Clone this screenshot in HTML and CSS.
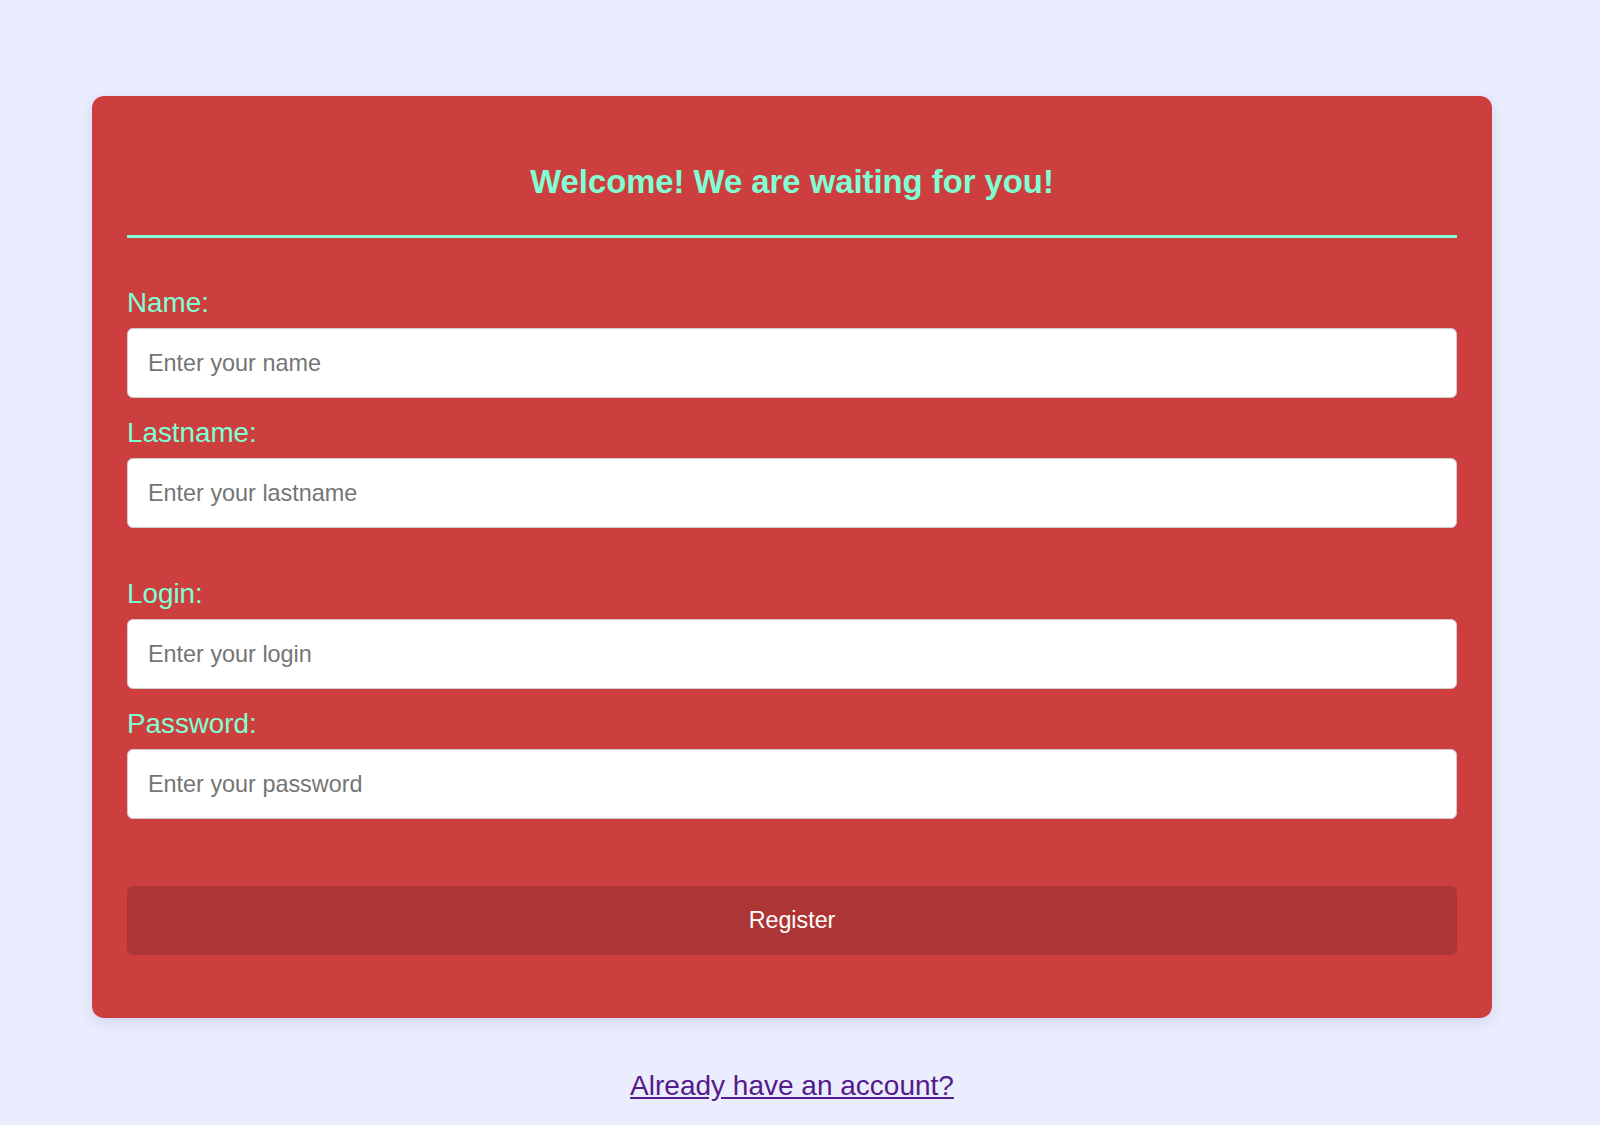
FILE: index.html
```html
<!DOCTYPE html>
<html lang="en">
<head>
<meta charset="utf-8">
<title>Register</title>
<link rel="stylesheet" href="styles.css">
</head>
<body>
<div class="page">
  <form class="card">
    <h2 class="title">Welcome! We are waiting for you!</h2>
    <div class="group">
      <label class="label" for="name">Name:</label>
      <input class="input" id="name" type="text" placeholder="Enter your name">
      <label class="label" for="lastname">Lastname:</label>
      <input class="input" id="lastname" type="text" placeholder="Enter your lastname">
    </div>
    <div class="group">
      <label class="label" for="login">Login:</label>
      <input class="input" id="login" type="text" placeholder="Enter your login">
      <label class="label" for="password">Password:</label>
      <input class="input" id="password" type="password" placeholder="Enter your password">
    </div>
    <button class="btn" type="button">Register</button>
  </form>
  <a class="link" href="#">Already have an account?</a>
</div>
</body>
</html>
```
FILE: styles.css
```css
html, body {
  margin: 0;
  padding: 0;
  background: #eaedfd;
  font-family: "Liberation Sans", Arial, sans-serif;
}
.page {
  width: 1584px;
  padding-top: 96px;
  display: flex;
  flex-direction: column;
  align-items: center;
}
.card {
  box-sizing: border-box;
  width: 1400px;
  background: #cd3f3f;
  border-radius: 12px;
  padding: 35px 35px 35px 35px;
  box-shadow: 0 4px 14px rgba(40, 50, 120, 0.12);
  display: flex;
  flex-direction: column;
}
.title {
  margin: 32px 0 0 0;
  padding-bottom: 35px;
  border-bottom: 3px solid #7fffd4;
  color: #7fffd4;
  font-size: 32.8px;
  font-weight: bold;
  line-height: 37px;
  text-align: center;
}
.group {
  display: flex;
  flex-direction: column;
  margin-top: 48px;
}
.group + .group {
  margin-top: 49px;
}
.label {
  color: #7fffd4;
  font-size: 27.8px;
  line-height: 33px;
  margin-bottom: 9px;
}
.input {
  box-sizing: border-box;
  height: 70px;
  margin: 0 0 18px 0;
  padding: 0 20px;
  border: 1px solid #cccccc;
  border-radius: 6px;
  background: #ffffff;
  font-family: "Liberation Sans", Arial, sans-serif;
  font-size: 23.4px;
  color: #333;
}
.input:last-child {
  margin-bottom: 0;
}
.input::placeholder {
  color: #757575;
}
.btn {
  margin-top: 67px;
  margin-bottom: 28px;
  height: 69px;
  border: none;
  border-radius: 6px;
  background: #ae3535;
  color: #ffffff;
  font-family: "Liberation Sans", Arial, sans-serif;
  font-size: 23.3px;
}
.link {
  margin-top: 51px;
  color: #551a8b;
  font-size: 28px;
  line-height: 33px;
  text-decoration: underline;
}
```
